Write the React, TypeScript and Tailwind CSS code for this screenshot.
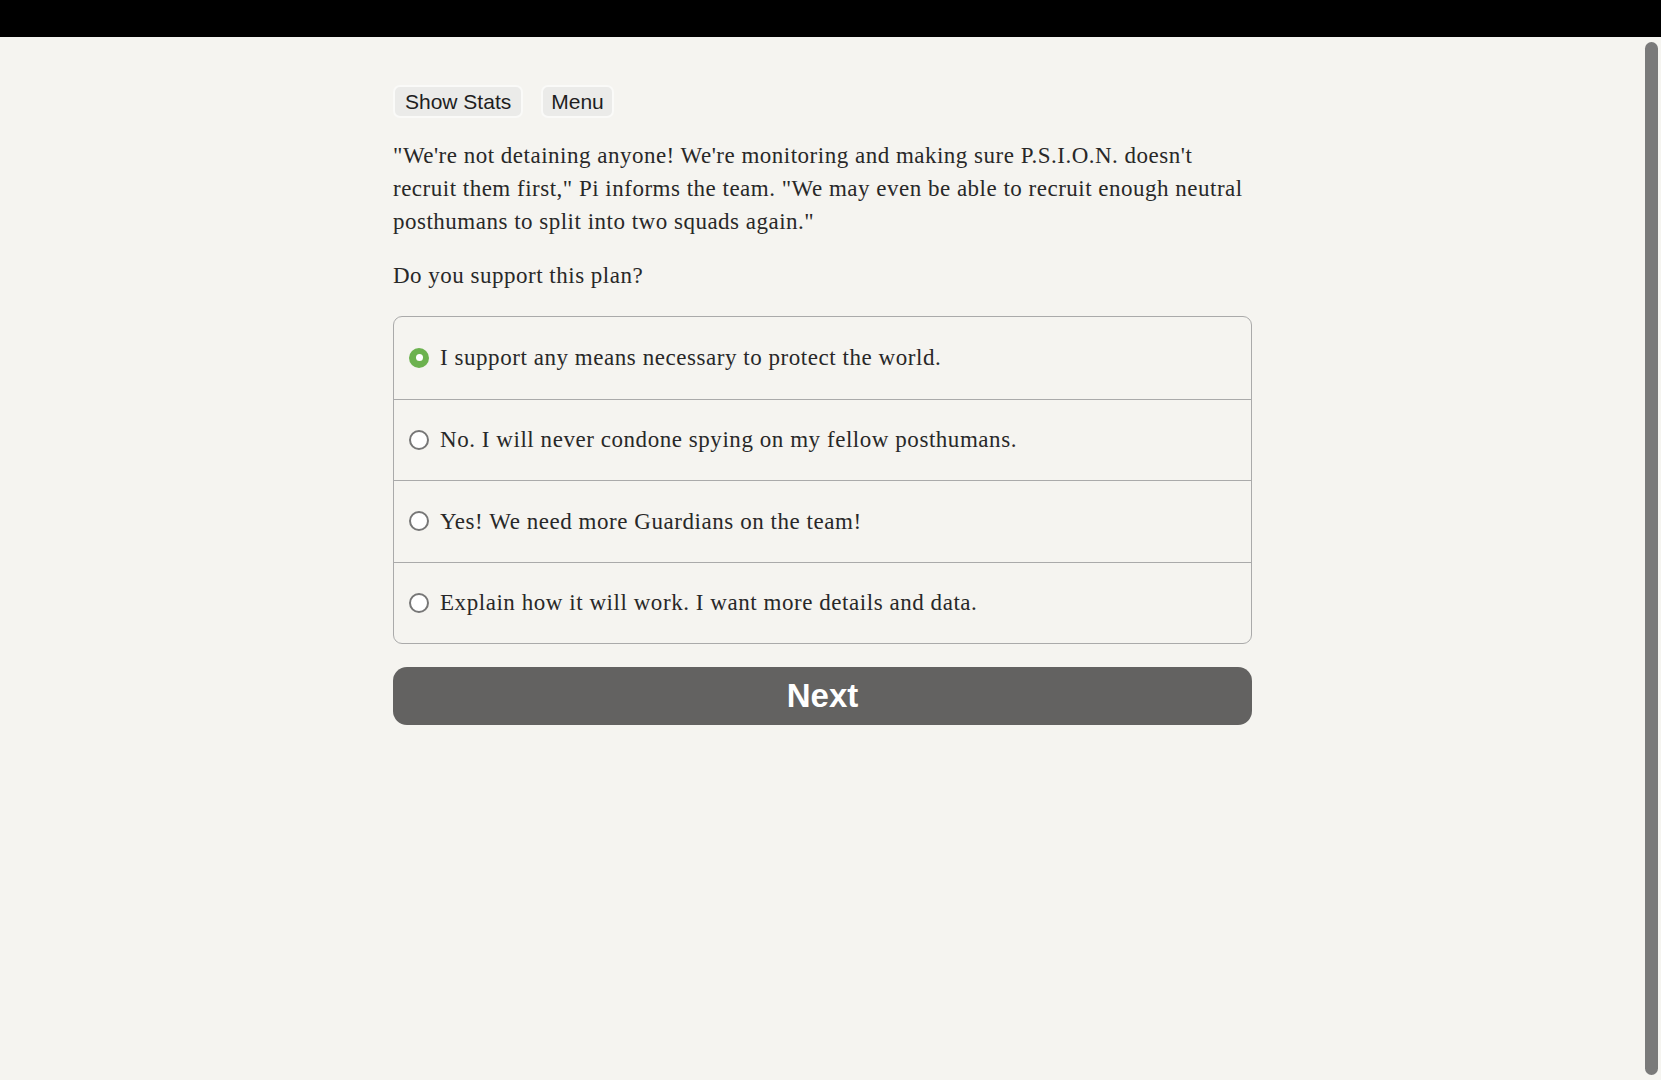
import React, { useState } from "react";

const choices = [
  "I support any means necessary to protect the world.",
  "No. I will never condone spying on my fellow posthumans.",
  "Yes! We need more Guardians on the team!",
  "Explain how it will work. I want more details and data.",
];

export default function App() {
  const [sel, setSel] = useState(0);
  const serif = { fontFamily: '"Liberation Serif", "DejaVu Serif", serif' };
  return (
    <div className="h-screen w-full overflow-hidden flex flex-col bg-[#f5f4f0]">
      <div className="h-[37px] bg-black shrink-0" />
      <div className="flex flex-1 min-h-0">
        <main className="flex-1 min-w-0">
          <div className="w-[859px] mx-auto pt-[48px]">
            <div className="flex gap-[18px] font-['Liberation_Sans',Arial,sans-serif] text-[21px] text-[#1e1e1e]">
              <button className="h-[33px] px-[10px] rounded-[7px] bg-[#ebebe9] border-2 border-[#fafaf8] leading-none">
                Show Stats
              </button>
              <button className="h-[33px] px-[8px] rounded-[7px] bg-[#ebebe9] border-2 border-[#fafaf8] leading-none">
                Menu
              </button>
            </div>
            <div
              className="text-[23px] leading-[33px] tracking-[0.5px] text-[#282828]"
              style={serif}
            >
              <p className="mt-[21px]">
                "We're not detaining anyone! We're monitoring and making sure P.S.I.O.N. doesn't
                <br />
                recruit them first," Pi informs the team. "We may even be able to recruit enough neutral
                <br />
                posthumans to split into two squads again."
              </p>
              <p className="mt-[21px]">Do you support this plan?</p>
              <div className="mt-[24px] border-[1.5px] border-[#aaaaaa] rounded-[9px] overflow-hidden tracking-[0.55px]">
                {choices.map((c, i) => (
                  <label
                    key={i}
                    onClick={() => setSel(i)}
                    className={`flex items-center h-[81.5px] pl-[15px] cursor-pointer ${
                      i > 0 ? "border-t-[1.5px] border-[#aaaaaa]" : ""
                    }`}
                  >
                    {sel === i ? (
                      <span className="w-[20px] h-[20px] rounded-full bg-[#6cb24f] flex items-center justify-center shrink-0">
                        <span className="w-[7px] h-[7px] rounded-full bg-white" />
                      </span>
                    ) : (
                      <span className="w-[20px] h-[20px] rounded-full bg-white border-2 border-[#777777] shrink-0" />
                    )}
                    <span className="ml-[11px]">{c}</span>
                  </label>
                ))}
              </div>
            </div>
            <button className="mt-[23px] w-full h-[58px] rounded-[14px] bg-[#636261] text-white font-bold text-[33px] font-['Liberation_Sans',Arial,sans-serif]">
              Next
            </button>
          </div>
        </main>
        <aside className="w-[16px] shrink-0 pt-[5px] pb-[5px] pr-[3px]">
          <div className="w-[13px] h-full rounded-full bg-[#7a7a7a]" />
        </aside>
      </div>
    </div>
  );
}
